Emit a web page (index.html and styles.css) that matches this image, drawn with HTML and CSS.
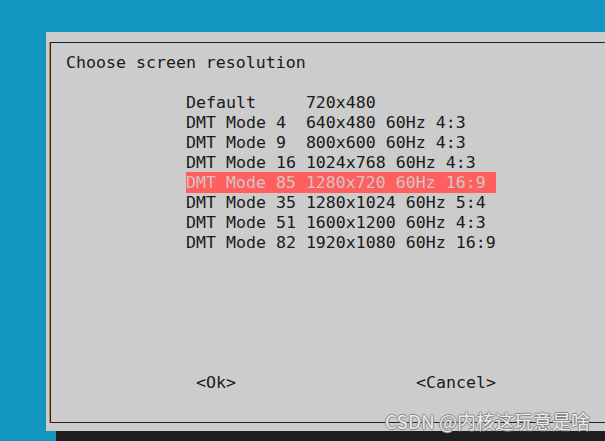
FILE: index.html
```html
<!DOCTYPE html>
<html lang="en">

<head>
    <meta charset="UTF-8">
    <title>Screen resolution</title>
    <link rel="stylesheet" href="styles.css">
</head>

<body>
    <div class="window">
        <div class="frame">
            <div class="title">Choose screen resolution</div>
            <ul class="menu">
                <li class="item">Default     720x480</li>
                <li class="item">DMT Mode 4  640x480 60Hz 4:3</li>
                <li class="item">DMT Mode 9  800x600 60Hz 4:3</li>
                <li class="item">DMT Mode 16 1024x768 60Hz 4:3</li>
                <li class="item selected">DMT Mode 85 1280x720 60Hz 16:9</li>
                <li class="item">DMT Mode 35 1280x1024 60Hz 5:4</li>
                <li class="item">DMT Mode 51 1600x1200 60Hz 4:3</li>
                <li class="item">DMT Mode 82 1920x1080 60Hz 16:9</li>
            </ul>
            <div class="buttons">
                <span class="btn ok">&lt;Ok&gt;</span>
                <span class="btn cancel">&lt;Cancel&gt;</span>
            </div>
        </div>
    </div>
    <div class="taskbar"></div>
    <div class="watermark">CSDN @内核这玩意是啥</div>
</body>

</html>
```

FILE: styles.css
```css
body {
    margin: 0;
    height: 441px;
    overflow: hidden;
    background-color: #1396bf;
    font-family: "DejaVu Sans Mono", monospace;
    font-size: 16.6px;
    line-height: 20px;
    color: #1a1a1a;
    position: relative;
}

.window {
    margin: 32px 0 0 46px;
    height: 399px;
    padding: 10px 0 0 4px;
    box-sizing: border-box;
    background-color: #cccccc;
}

.frame {
    height: 381px;
    box-sizing: border-box;
    border-top: 1px solid #222;
    border-left: 1px solid #222;
    border-bottom: 1px solid #222;
    box-shadow: -1px 0 0 #c8803c;
    padding: 10px 0 0 15px;
}

.title {
    height: 20px;
}

.menu {
    list-style: none;
    margin: 20px 0 0 120px;
    padding: 0;
}

.item {
    white-space: pre;
    width: 31ch;
    height: 20px;
}

.item.selected {
    background-color: #ff5f5f;
    color: #d4c4c4;
    margin-top: -1px;
    padding-top: 1px;
}

.buttons {
    margin-top: 120px;
    display: flex;
    white-space: pre;
}

.btn.ok {
    margin-left: 130px;
}

.btn.cancel {
    margin-left: 180px;
}

.taskbar {
    margin-left: 56px;
    height: 10px;
    background-color: #1e1e1e;
}

.watermark {
    position: absolute;
    right: 15px;
    top: 408px;
    font-family: "Noto Sans CJK SC", "Noto Sans", sans-serif;
    font-size: 19px;
    line-height: 26px;
    color: rgba(255, 255, 255, 0.85);
    text-shadow: -1px 0 0 #8a8a8a, 1px 0 0 #8a8a8a, 0 -1px 0 #8a8a8a, 0 1px 0 #8a8a8a;
}
```
